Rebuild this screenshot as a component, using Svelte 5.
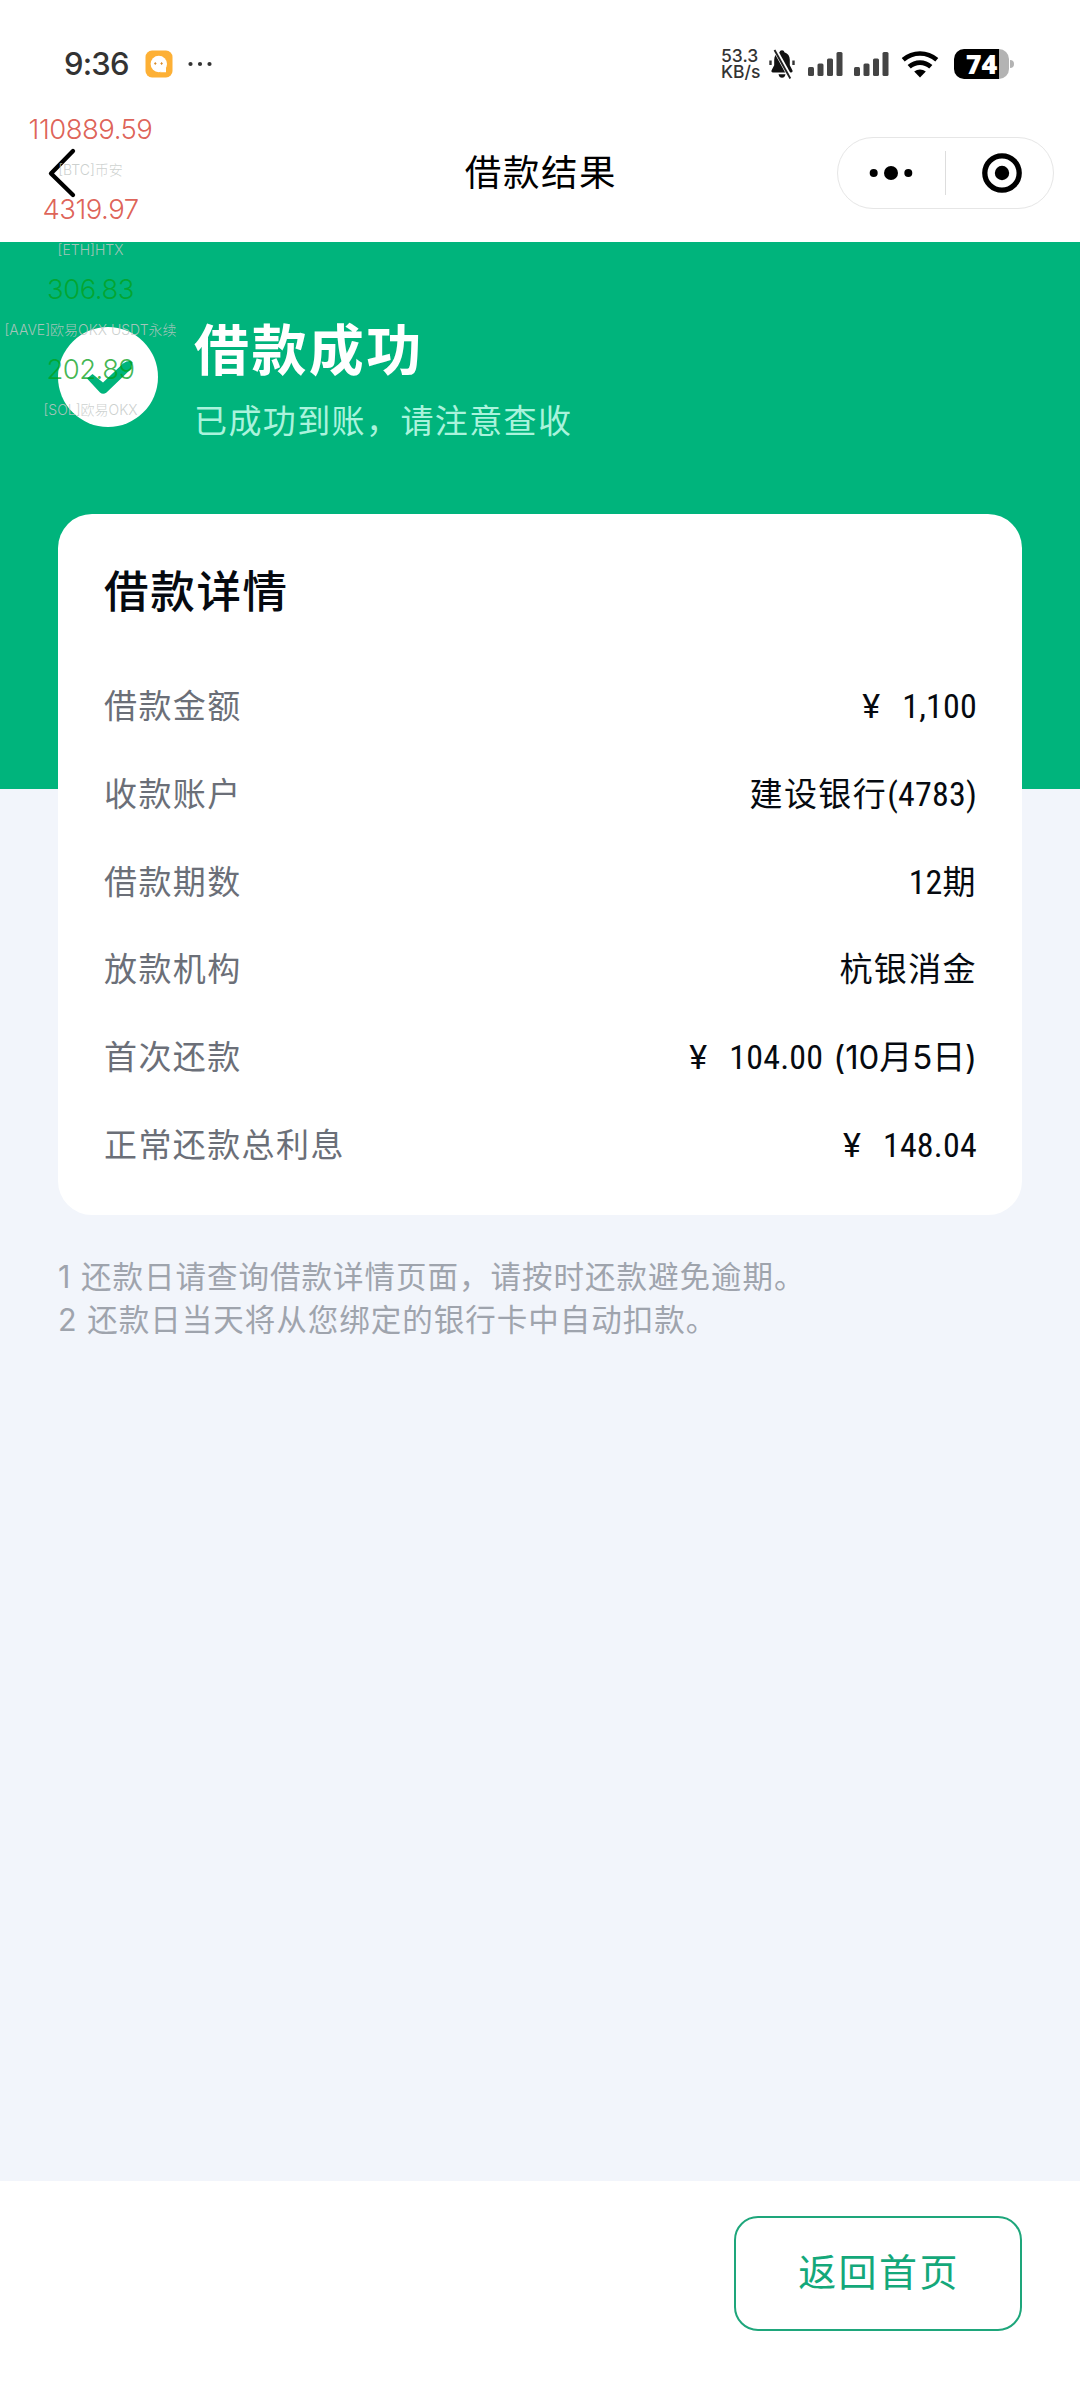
<script>
	const quotes = [
		{ price: '110889.59', label: '[BTC]币安', dir: 'down' },
		{ price: '4319.97', label: '[ETH]HTX', dir: 'down' },
		{ price: '306.83', label: '[AAVE]欧易OKX USDT永续', dir: 'up' },
		{ price: '202.89', label: '[SOL]欧易OKX', dir: 'up' }
	];

	// Each value is split into runs: yen sign, narrow numerals, plain text.
	const rows = [
		{ label: '借款金额', value: [['yen', '¥'], ['num', '1,100']] },
		{ label: '收款账户', value: [['txt', '建设银行'], ['num', '(4783)']] },
		{ label: '借款期数', value: [['num', '12'], ['txt', '期']] },
		{ label: '放款机构', value: [['txt', '杭银消金']] },
		{ label: '首次还款', value: [['yen', '¥'], ['num', '104.00'], ['txt date', '(10月5日)']] },
		{ label: '正常还款总利息', value: [['yen', '¥'], ['num', '148.04']] }
	];

	const notes = [
		'1 还款日请查询借款详情页面，请按时还款避免逾期。',
		'2 还款日当天将从您绑定的银行卡中自动扣款。'
	];
</script>

{#snippet signal()}
	<svg class="signal" width="36" height="30" viewBox="0 0 36 30" fill="#444">
		<rect x="0" y="18" width="6" height="9" rx="1.5" />
		<rect x="9.5" y="14.5" width="6" height="12.5" rx="1.5" />
		<rect x="19" y="9.5" width="6" height="17.5" rx="1.5" />
		<rect x="28.5" y="3" width="6" height="24" rx="1.5" />
	</svg>
{/snippet}

<div class="screen">
	<header>
		<div class="status">
			<span class="time">9:36</span>
			<svg class="app" width="28" height="28" viewBox="0 0 28 28">
				<rect x="0.5" y="0.5" width="27" height="27" rx="6.5" fill="#fdb035" />
				<circle cx="13.8" cy="14" r="8.2" fill="#fff" />
				<path d="M15 22.2h6v-5z" fill="#fff" />
				<path d="M10.3 12.2v2.6M9.2 13.5h2.2M16.6 12.2v2.6M15.5 13.5h2.2" stroke="#d98b2b" stroke-width="1.1" />
			</svg>
			<svg class="more" width="24" height="6" viewBox="0 0 24 6" fill="#333">
				<circle cx="2.5" cy="3" r="2.1" /><circle cx="12" cy="3" r="2.1" /><circle cx="21.5" cy="3" r="2.1" />
			</svg>
			<span class="speed"><span>53.3</span><span>KB/s</span></span>
			<svg class="bell" width="26" height="30" viewBox="0 0 26 30">
				<path d="M13 1.2c1.4 0 2.2.8 2.4 2 3.6 1.1 5.4 4 5.4 7.6v5.4l2.6 5c.5 1.2 0 2.2-1.3 2.2H3.9c-1.3 0-1.8-1-1.3-2.2l2.6-5v-5.4c0-3.6 1.8-6.5 5.4-7.6.2-1.2 1-2 2.4-2z" fill="#111" />
				<path d="M9.5 25.2h7c-.5 2.4-1.7 3.6-3.5 3.6s-3-1.2-3.5-3.6z" fill="#111" />
				<path d="M1.5 11.5v4.5M24.5 11.5v4.5" stroke="#333" stroke-width="2.4" />
				<path d="M6.2 1 22 29.5" stroke="#fff" stroke-width="4.4" />
				<path d="M5.5 1 21.3 29.5" stroke="#222" stroke-width="1.9" />
			</svg>
			{@render signal()}
			{@render signal()}
			<svg class="wifi" width="38" height="28" viewBox="0 0 38 28">
				<path d="M2.2 9.8C12 1.4 26 1.4 35.8 9.8" fill="none" stroke="#000" stroke-width="4.6" />
				<path d="M8.2 16.7C14.5 11.2 23.5 11.2 29.8 16.7" fill="none" stroke="#000" stroke-width="4.8" />
				<path d="M13.2 21.6c3.6-2.9 8-2.9 11.6 0L19 27.6z" fill="#000" />
			</svg>
			<div class="battery"><span>74</span></div>
			<i class="nub"></i>
		</div>

		<nav>
			<svg class="back" width="30" height="52" viewBox="0 0 30 52">
				<path d="M26 4 4 26.5 26 48" fill="none" stroke="#000" stroke-width="4.3" stroke-linecap="round" stroke-linejoin="round" />
			</svg>
			<h1>借款结果</h1>
			<div class="capsule">
				<svg width="44" height="16" viewBox="0 0 44 16">
					<circle cx="4.7" cy="8" r="4" /><circle cx="22" cy="8" r="7" /><circle cx="39.3" cy="8" r="4" />
				</svg>
				<span class="split"></span>
				<svg width="40" height="40" viewBox="0 0 40 40">
					<circle cx="20" cy="20" r="17.2" fill="none" stroke="#000" stroke-width="5.3" />
					<circle cx="20" cy="20" r="7.2" />
				</svg>
			</div>
		</nav>
	</header>

	<section class="hero">
		<svg width="100" height="100" viewBox="0 0 100 100">
			<circle cx="50" cy="50" r="50" fill="#fff" />
			<path d="M29 51.5 34.5 47 45 55.5 65 36.5Q71 32.5 74.5 35L73 42 48.5 65.5Q45 68 42 65.500Z" fill="#00b47c" />
		</svg>
		<div class="result">
			<h2>借款成功</h2>
			<p>已成功到账，请注意查收</p>
		</div>
	</section>

	<main>
		<div class="card">
			<h3>借款详情</h3>
			{#each rows as row}
				<div class="row">
					<span class="label">{row.label}</span>
					<span class="value">{#each row.value as [kind, text]}<span class={kind}>{text}</span>{/each}</span>
				</div>
			{/each}
		</div>
		<div class="notes">
			{#each notes as note}
				<p>{note}</p>
			{/each}
		</div>
	</main>

	<footer>
		<button>返回首页</button>
	</footer>

	<!-- Floating quote ticker, drawn over the page -->
	<div class="ticker">
		{#each quotes as q}
			<div class="price {q.dir}">{q.price}</div>
			<div class="pair">{q.label}</div>
		{/each}
	</div>
</div>

<style>
	:global(body) {
		background: #f2f5fb;
	}
	.screen {
		position: relative;
		display: flex;
		flex-direction: column;
		width: 1080px;
		height: 2400px;
		overflow: hidden;
		background: #f2f5fb;
		font-family: 'Noto Sans CJK SC', sans-serif;
	}
	h1, h2, h3, p {
		margin: 0;
		font-weight: 400;
	}
	svg {
		display: block;
		flex: none;
	}
	header {
		height: 242px;
		flex: none;
		background: #fff;
	}
	.status {
		display: flex;
		align-items: center;
		height: 126px;
		padding: 1px 70px 0 64px;
		box-sizing: border-box;
	}
	.time {
		width: 81px;
		font-family: Inter, sans-serif;
		font-size: 31px;
		font-weight: 500;
		letter-spacing: -0.8px;
		color: #333;
	}
	.more {
		margin-left: 15px;
	}
	.speed {
		display: flex;
		flex-direction: column;
		width: 48px;
		margin-left: auto;
		font-family: Inter, sans-serif;
		font-size: 17.5px;
		font-weight: 500;
		line-height: 16px;
		color: #333;
	}
	.bell {
		margin-right: 13px;
	}
	.signal {
		margin-right: 10px;
	}
	.wifi {
		margin: 0 15px 0 1px;
	}
	.battery {
		display: flex;
		align-items: center;
		justify-content: center;
		width: 55px;
		height: 30px;
		border-radius: 10px;
		background: linear-gradient(90deg, #000 45px, #b3b3b3 45px);
	}
	.battery span {
		font-family: 'Open Sans', sans-serif;
		font-size: 27px;
		font-weight: 800;
		line-height: 30px;
		color: #fff;
	}
	.nub {
		width: 4px;
		height: 8px;
		margin: 0 -4px 0 1px;
		border-radius: 0 4px 4px 0;
		background: #b3b3b3;
	}
	nav {
		display: flex;
		align-items: center;
		justify-content: space-between;
		height: 94px;
		padding: 0 26px 0 47px;
	}
	.back {
		margin-right: 168px;
	}
	h1 {
		margin-bottom: 4px;
		font-size: 36.5px;
		letter-spacing: 1.6px;
		line-height: 50px;
	}
	.capsule {
		display: flex;
		align-items: center;
		justify-content: space-between;
		width: 217px;
		height: 72px;
		padding: 0 31px;
		box-sizing: border-box;
		border: 1px solid #e6e6e6;
		border-radius: 36px;
	}
	.split {
		width: 1px;
		height: 44px;
		margin-right: 5px;
		background: #ddd;
	}
	.hero {
		display: flex;
		align-items: flex-start;
		gap: 36px;
		height: 547px;
		flex: none;
		padding: 85px 58px 0;
		box-sizing: border-box;
		background: #00b47c;
	}
	.result {
		margin-top: -16px;
	}
	h2 {
		font-size: 55px;
		font-weight: 700;
		line-height: 70px;
		letter-spacing: 2.4px;
		color: #fff;
	}
	.result p {
		margin-top: 14px;
		font-size: 33px;
		line-height: 48px;
		letter-spacing: 1.4px;
		color: #aaf3dc;
	}
	main {
		flex: 1;
		margin-top: -275px;
		padding: 0 58px;
	}
	.card {
		height: 701px;
		padding: 45px 46px 0;
		box-sizing: border-box;
		border-radius: 34px;
		background: #fff;
	}
	h3 {
		margin-bottom: 41px;
		font-size: 44.5px;
		font-weight: 500;
		line-height: 60px;
		letter-spacing: 1.7px;
		color: #060a10;
	}
	.row {
		display: flex;
		justify-content: space-between;
		height: 87.8px;
		font-size: 33px;
		line-height: 88px;
		letter-spacing: 1.4px;
		white-space: nowrap;
	}
	.label {
		color: #6b6f78;
	}
	.value {
		display: flex;
		margin-right: -1px;
		color: #060a10;
	}
	.num,
	.yen {
		padding-top: 2px;
		font-family: Roboto, sans-serif;
		font-size: 34px;
		font-stretch: 85%;
		letter-spacing: 0.2px;
	}
	.yen {
		width: 40px;
		font-stretch: 100%;
	}
	.date {
		margin-left: 10px;
		padding-top: 2px;
		font-family: Inter, 'Noto Sans CJK SC', sans-serif;
		letter-spacing: -0.1px;
	}
	.notes {
		padding-top: 40px;
		font-family: Inter, 'Noto Sans CJK SC', sans-serif;
		font-size: 30.5px;
		line-height: 43.2px;
		letter-spacing: 1px;
		color: #9fa4ad;
	}
	footer {
		display: flex;
		justify-content: flex-end;
		height: 219px;
		flex: none;
		padding: 35px 58px 0;
		box-sizing: border-box;
		background: #fff;
	}
	button {
		width: 288px;
		height: 115px;
		padding: 0 0 8px 2px;
		border: 2px solid #1ea67b;
		border-radius: 24px;
		background: #fff;
		font-family: inherit;
		font-size: 38px;
		letter-spacing: 2.4px;
		color: #14a87a;
	}
	.ticker {
		position: absolute;
		top: 109px;
		left: 0;
		width: 181px;
		font-family: Inter, 'Noto Sans CJK SC', sans-serif;
		font-weight: 300;
		text-align: center;
		white-space: nowrap;
	}
	.price {
		height: 42px;
		font-size: 27.5px;
		line-height: 40px;
		letter-spacing: -0.5px;
	}
	.price.down {
		color: rgba(218, 80, 68, 0.9);
	}
	.price.up {
		color: rgba(5, 160, 25, 0.75);
	}
	.pair {
		height: 38px;
		font-size: 14px;
		line-height: 38px;
		color: rgba(195, 200, 198, 0.85);
	}
</style>
